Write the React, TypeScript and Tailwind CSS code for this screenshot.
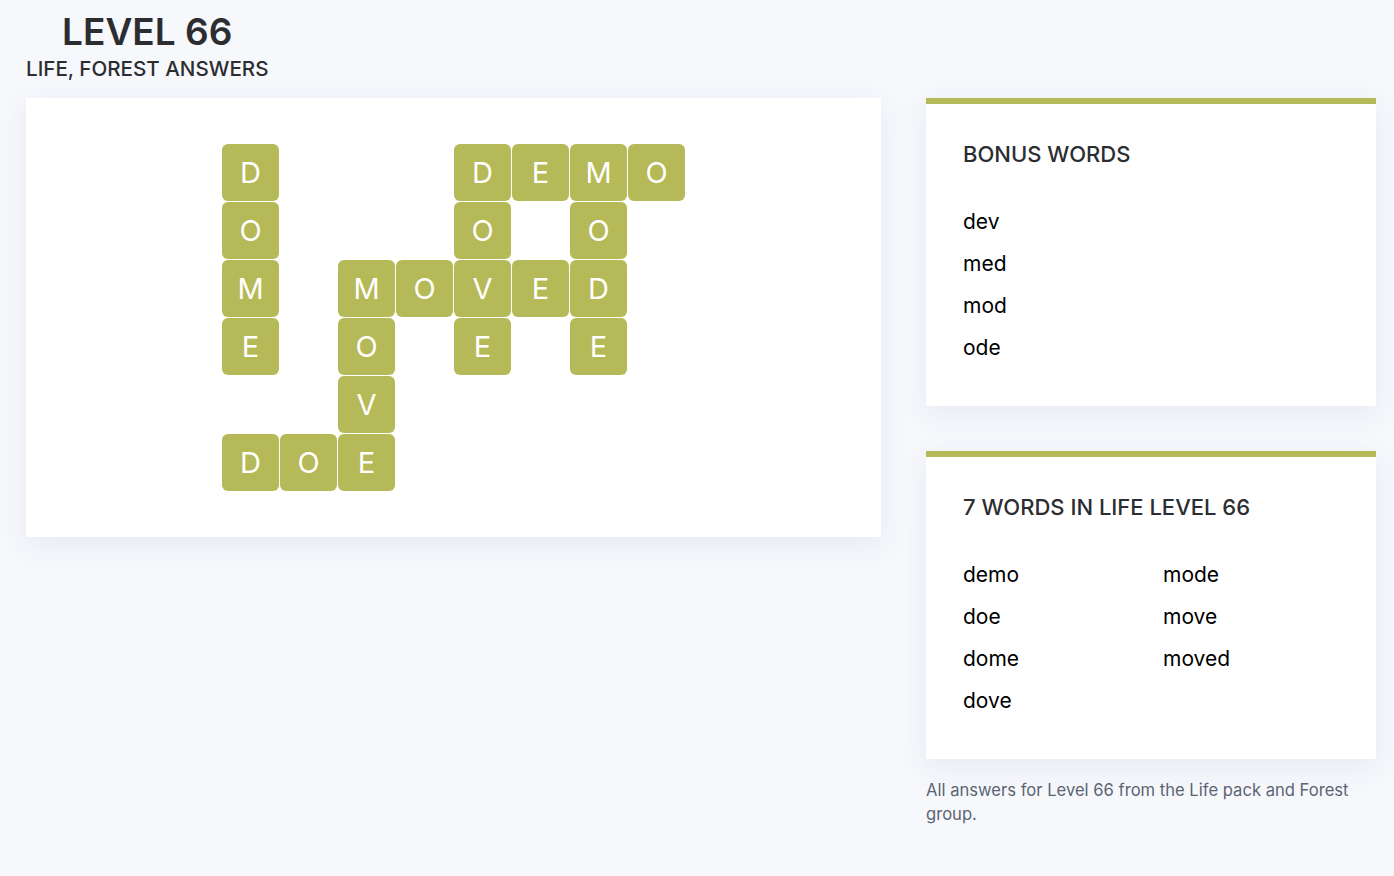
import React from "react";

const grid: (string | null)[][] = [
  ["D", null, null, null, "D", "E", "M", "O"],
  ["O", null, null, null, "O", null, "O", null],
  ["M", null, "M", "O", "V", "E", "D", null],
  ["E", null, "O", null, "E", null, "E", null],
  [null, null, "V", null, null, null, null, null],
  ["D", "O", "E", null, null, null, null, null],
];

const font = { fontFamily: "Inter, 'Noto Sans', 'Liberation Sans', sans-serif" };

function Card({ title, children }: { title: string; children: React.ReactNode }) {
  return (
    <div className="bg-white border-t-[6px] border-[#b5b958] shadow-[0_8px_28px_rgba(40,60,110,0.08)] px-[37px] pt-[36px] pb-[37px]">
      <h2 className="text-[22px] leading-[28px] font-medium text-[#2b2d31]">{title}</h2>
      <div className="mt-[33px]">{children}</div>
    </div>
  );
}

function Word({ w }: { w: string }) {
  return <div className="text-[21px] leading-[42px] text-black">{w}</div>;
}

export default function App() {
  return (
    <div className="min-h-[876px] bg-[#f7f8fc] text-[#2b2d31]" style={font}>
      <div className="pl-[26px] pr-[18px] pt-[12px]">
        <div className="inline-flex flex-col items-center">
          <h1 className="text-[37px] leading-[40px] font-semibold text-[#2b2d31]">LEVEL 66</h1>
          <div className="text-[20.6px] leading-[28px] font-medium text-[#2b2d31] mt-[3px]">LIFE, FOREST ANSWERS</div>
        </div>
        <div className="flex gap-[45px] mt-[15px] items-start">
          <div className="w-[855px] bg-white shadow-[0_8px_28px_rgba(40,60,110,0.08)] flex justify-center pt-[46px] pb-[46px]">
            <div className="grid grid-cols-[repeat(8,57px)] grid-rows-[repeat(6,57px)] gap-[1px]">
              {grid.flatMap((row, r) =>
                row.map((c, i) =>
                  c ? (
                    <div
                      key={`${r}-${i}`}
                      className="bg-[#b5b958] rounded-[6px] flex items-center justify-center text-white text-[29px] leading-none"
                    >
                      {c}
                    </div>
                  ) : (
                    <div key={`${r}-${i}`} />
                  )
                )
              )}
            </div>
          </div>
          <div className="w-[450px] flex flex-col">
            <Card title="BONUS WORDS">
              {["dev", "med", "mod", "ode"].map((w) => (
                <Word key={w} w={w} />
              ))}
            </Card>
            <div className="mt-[45px]">
              <Card title="7 WORDS IN LIFE LEVEL 66">
                <div className="grid grid-cols-[200px_1fr]">
                  <div>
                    {["demo", "doe", "dome", "dove"].map((w) => (
                      <Word key={w} w={w} />
                    ))}
                  </div>
                  <div>
                    {["mode", "move", "moved"].map((w) => (
                      <Word key={w} w={w} />
                    ))}
                  </div>
                </div>
              </Card>
            </div>
            <p className="mt-[19px] text-[16.6px] leading-[24px] text-[#5a6573]">
              All answers for Level 66 from the Life pack and Forest group.
            </p>
          </div>
        </div>
      </div>
    </div>
  );
}
